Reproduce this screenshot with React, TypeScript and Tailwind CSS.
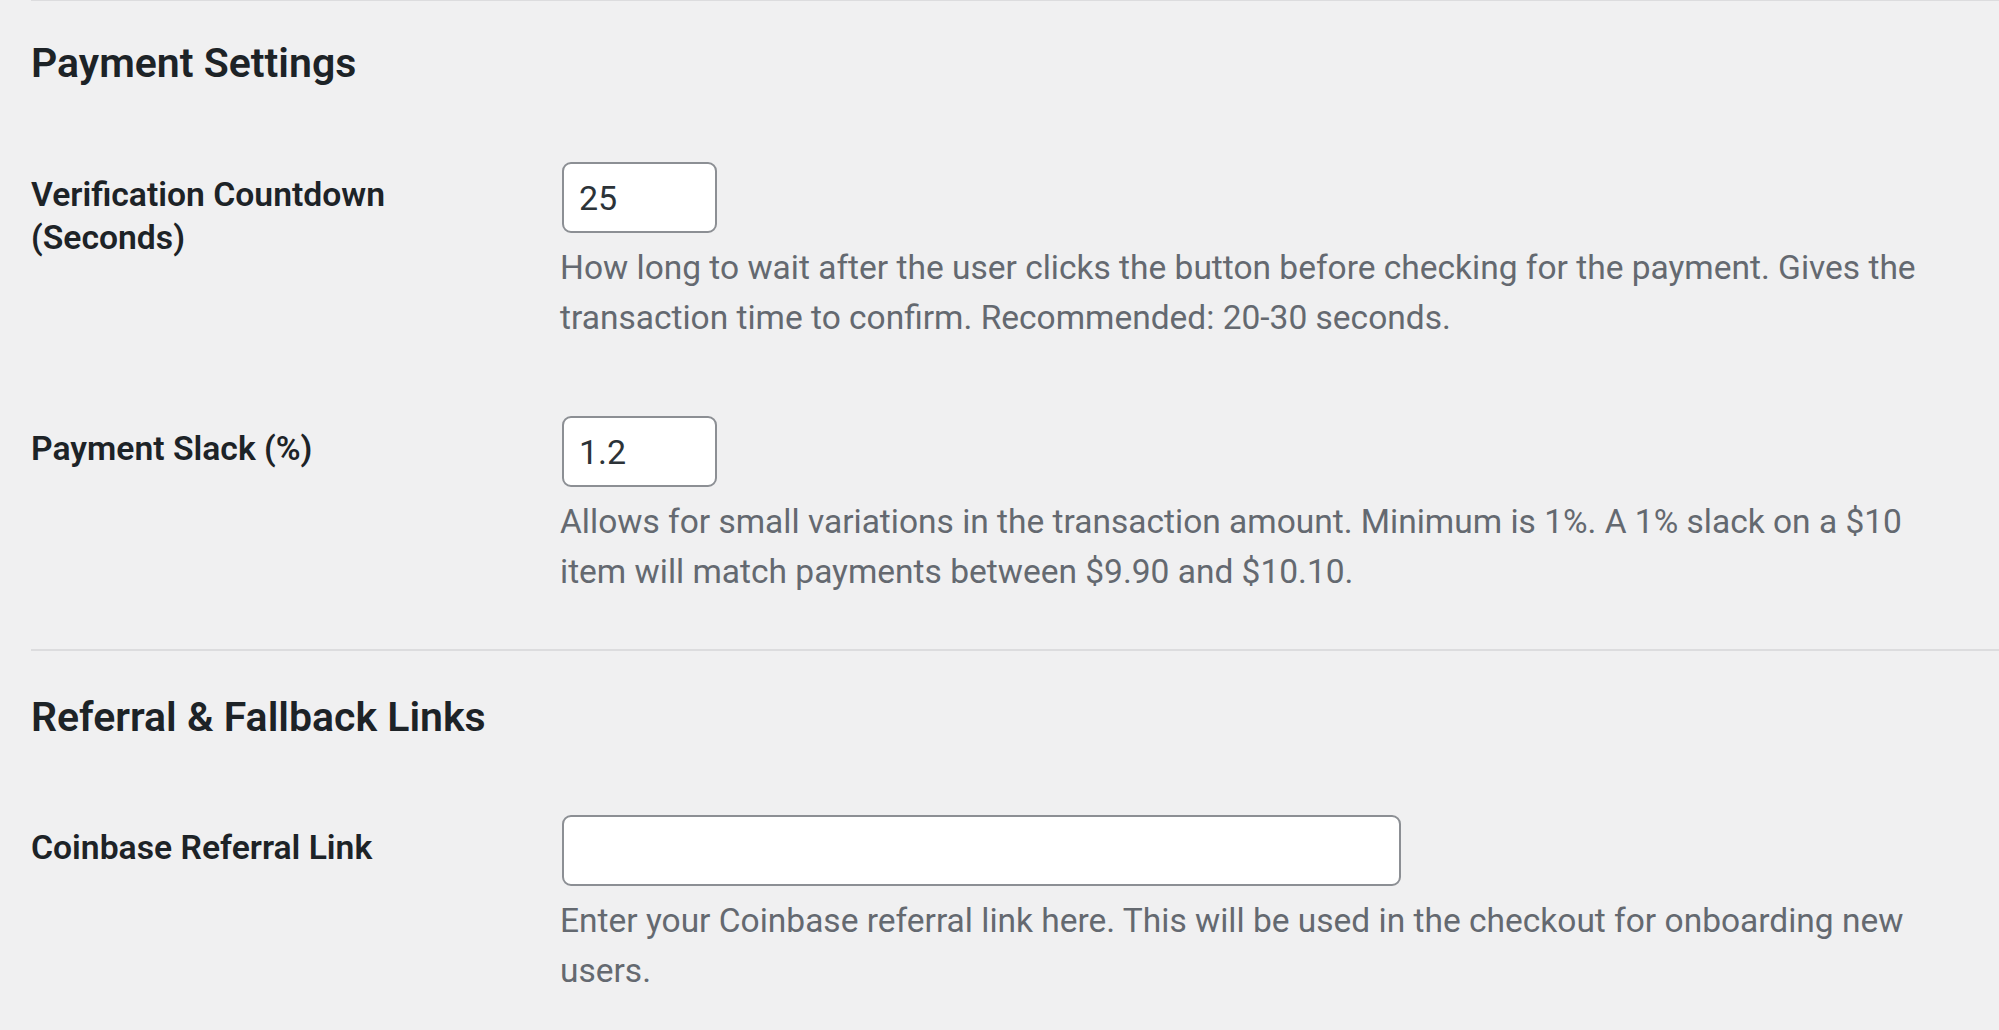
import React from 'react';

interface FieldRowProps {
  label: string;
  value: string;
  inputWidth: string; // full class, e.g. w-[155px]
  description: string;
  className?: string;
}

function FieldRow({ label, value, inputWidth, description, className }: FieldRowProps) {
  return (
    <div className={`flex items-start ${className || ''}`}>
      <div className="w-[529px] shrink-0 pr-[76px] pt-[11px] text-[33.7px] leading-[43px] font-semibold text-[#1d2327]">
        {label}
      </div>
      <div className="w-[1380px]">
        <input
          type="text"
          value={value}
          readOnly
          className={`ml-[2px] block h-[71px] ${inputWidth} rounded-[9px] border-2 border-[#8c8f94] bg-white pl-[15px] text-[34px] text-[#2c3338] outline-none`}
        />
        <p className="mt-[10px] text-[33.5px] leading-[50px] text-[#646970]">{description}</p>
      </div>
    </div>
  );
}

function SectionHeading({ children, className }: { children: React.ReactNode; className?: string }) {
  return (
    <h2 className={`text-[41px] leading-[52px] font-semibold text-[#1d2327] ${className || ''}`}>
      {children}
    </h2>
  );
}

export default function App() {
  return (
    <div className="h-screen overflow-hidden bg-[#f0f0f1] pl-[31px] font-[Roboto,sans-serif]">
      {/* tail of the previous section's rule */}
      <div className="h-px bg-[#dcdcde]" />

      <SectionHeading className="mt-[36px]">Payment Settings</SectionHeading>

      <FieldRow
        className="mt-[73px]"
        label="Verification Countdown (Seconds)"
        value="25"
        inputWidth="w-[155px]"
        description="How long to wait after the user clicks the button before checking for the payment. Gives the transaction time to confirm. Recommended: 20-30 seconds."
      />
      <FieldRow
        className="mt-[73px]"
        label="Payment Slack (%)"
        value="1.2"
        inputWidth="w-[155px]"
        description="Allows for small variations in the transaction amount. Minimum is 1%. A 1% slack on a $10 item will match payments between $9.90 and $10.10."
      />

      <hr className="mt-[52px] h-[2px] border-0 bg-[#dcdcde]" />

      <SectionHeading className="mt-[40px]">Referral &amp; Fallback Links</SectionHeading>

      <FieldRow
        className="mt-[72px]"
        label="Coinbase Referral Link"
        value=""
        inputWidth="w-[839px]"
        description="Enter your Coinbase referral link here. This will be used in the checkout for onboarding new users."
      />
    </div>
  );
}
